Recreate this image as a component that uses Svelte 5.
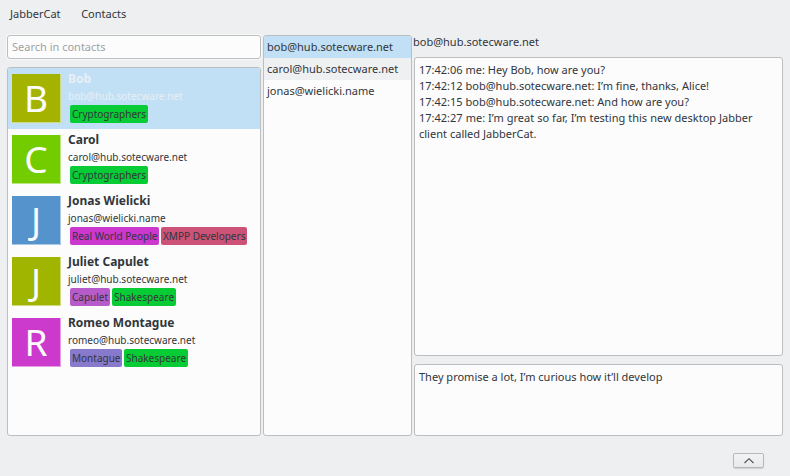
<script>
  const contacts = [
    { name: 'Bob', jid: 'bob@hub.sotecware.net', color: '#a4b300', selected: true, tags: [['Cryptographers', '#08cc35', 78]] },
    { name: 'Carol', jid: 'carol@hub.sotecware.net', color: '#73cc00', tags: [['Cryptographers', '#08cc35', 78]] },
    { name: 'Jonas Wielicki', jid: 'jonas@wielicki.name', color: '#5593cd', tags: [['Real World People', '#cc37cd', 89], ['XMPP Developers', '#cd5278', 86]] },
    { name: 'Juliet Capulet', jid: 'juliet@hub.sotecware.net', color: '#a0b500', tags: [['Capulet', '#b75bcb', 40], ['Shakespeare', '#08cc35', 64]] },
    { name: 'Romeo Montague', jid: 'romeo@hub.sotecware.net', color: '#cc3acd', tags: [['Montague', '#8779cc', 52], ['Shakespeare', '#08cc35', 64]] }
  ];
  const chats = ['bob@hub.sotecware.net', 'carol@hub.sotecware.net', 'jonas@wielicki.name'];
  const messages = [
    '17:42:06 me: Hey Bob, how are you?',
    '17:42:12 bob@hub.sotecware.net: I’m fine, thanks, Alice!',
    '17:42:15 bob@hub.sotecware.net: And how are you?',
    '17:42:27 me: I’m great so far, I’m testing this new desktop Jabber client called JabberCat.'
  ];
</script>

<div class="window">
  <nav><span>JabberCat</span><span>Contacts</span></nav>
  <main>
    <section class="roster">
      <input class="frame" placeholder="Search in contacts" />
      <div class="frame list">
        {#each contacts as c}
          <div class="contact" class:selected={c.selected}>
            <div class="avatar" style="background-color: {c.color}">{c.name[0]}</div>
            <div class="info">
              <div class="name">{c.name}</div>
              <div class="jid">{c.jid}</div>
              <div class="tags">
                {#each c.tags as [label, color, width]}
                  <span class="tag" style="background: {color}; width: {width}px">{label}</span>
                {/each}
              </div>
            </div>
          </div>
        {/each}
      </div>
    </section>
    <section class="frame chats">
      {#each chats as chat, i}
        <div class="chat" class:active={i === 0} class:alt={i === 1}>{chat}</div>
      {/each}
    </section>
    <section class="conversation">
      <div class="title">bob@hub.sotecware.net</div>
      <div class="frame log">
        {#each messages as m}<p>{m}</p>{/each}
      </div>
      <div class="frame compose">They promise a lot, I’m curious how it’ll develop</div>
    </section>
  </main>
  <footer>
    <button aria-label="Expand">
      <svg width="12" height="8" viewBox="0 0 12 8"><path d="M1.5 6 L6 1.7 L10.5 6" fill="none" stroke="#4d4f52" stroke-width="1.15" /></svg>
    </button>
  </footer>
</div>

<style>
  .window {
    box-sizing: border-box;
    width: 790px;
    height: 476px;
    display: flex;
    flex-direction: column;
    background: #eeeff1;
    color: #31363b;
    font: 11px/16px 'Noto Sans', sans-serif;
    overflow: hidden;
    white-space: nowrap;
  }
  .window * { box-sizing: border-box; }
  nav { display: flex; gap: 20.6px; height: 35px; padding: 6px 10px; }
  main { display: flex; gap: 2px; height: 401px; padding: 0 7px; }
  .frame { border: 1px solid #bcbebf; border-radius: 3px; background: #fcfcfc; overflow: hidden; }
  .roster { width: 254px; display: flex; flex-direction: column; gap: 8px; }
  input { width: 254px; height: 24px; margin: 0; padding: 0 4px 2px; font: inherit; color: inherit; outline: none; box-shadow: 0 0 0 1px #f8f9f9; }
  input::placeholder { color: #a0a2a4; opacity: 1; }
  .list { flex: 1; }
  .contact { display: flex; gap: 7px; height: 61px; padding: 6px 4px; }
  .selected { background: #c1dff5; }
  .avatar {
    width: 49px;
    height: 49px;
    flex: none;
    border: solid rgba(255, 255, 255, 0.5);
    border-width: 0 1px 1px 0;
    color: #fcfcfc;
    font-size: 37px;
    line-height: 48px;
    text-align: center;
  }
  .name { height: 15px; margin-top: -3px; font-weight: bold; font-size: 12px; line-height: 15px; }
  .jid { height: 16px; margin: 2px 0 1px; font-size: 10px; line-height: 16px; }
  .selected .name, .selected .jid { color: #e8eff6; }
  .tags { display: flex; gap: 2px; padding-left: 2px; }
  .tag { height: 18px; padding-left: 2px; border-radius: 2px; font-size: 10px; line-height: 19px; }
  .chats { width: 149px; }
  .chat { height: 22px; padding-left: 3px; line-height: 22px; }
  .active { background: #c1dff5; }
  .alt { background: #eff0f1; }
  .conversation { width: 369px; display: flex; flex-direction: column; }
  .title { height: 22px; margin-left: -1px; line-height: 14px; }
  .log { height: 299px; padding: 4px; white-space: normal; }
  p { margin: 0; }
  p:last-child { word-spacing: 0.15px; }
  .compose { height: 72px; margin-top: 8px; padding: 4px; }
  footer { display: flex; justify-content: flex-end; padding: 17px 26px 0 0; }
  button {
    width: 31px;
    height: 15px;
    padding: 0;
    display: flex;
    align-items: center;
    justify-content: center;
    border: 1px solid #b6b8ba;
    border-radius: 2px;
    background: linear-gradient(#f2f3f4, #e8e9ea);
    box-shadow: 0 1px 1px rgba(0, 0, 0, 0.13);
  }
</style>
